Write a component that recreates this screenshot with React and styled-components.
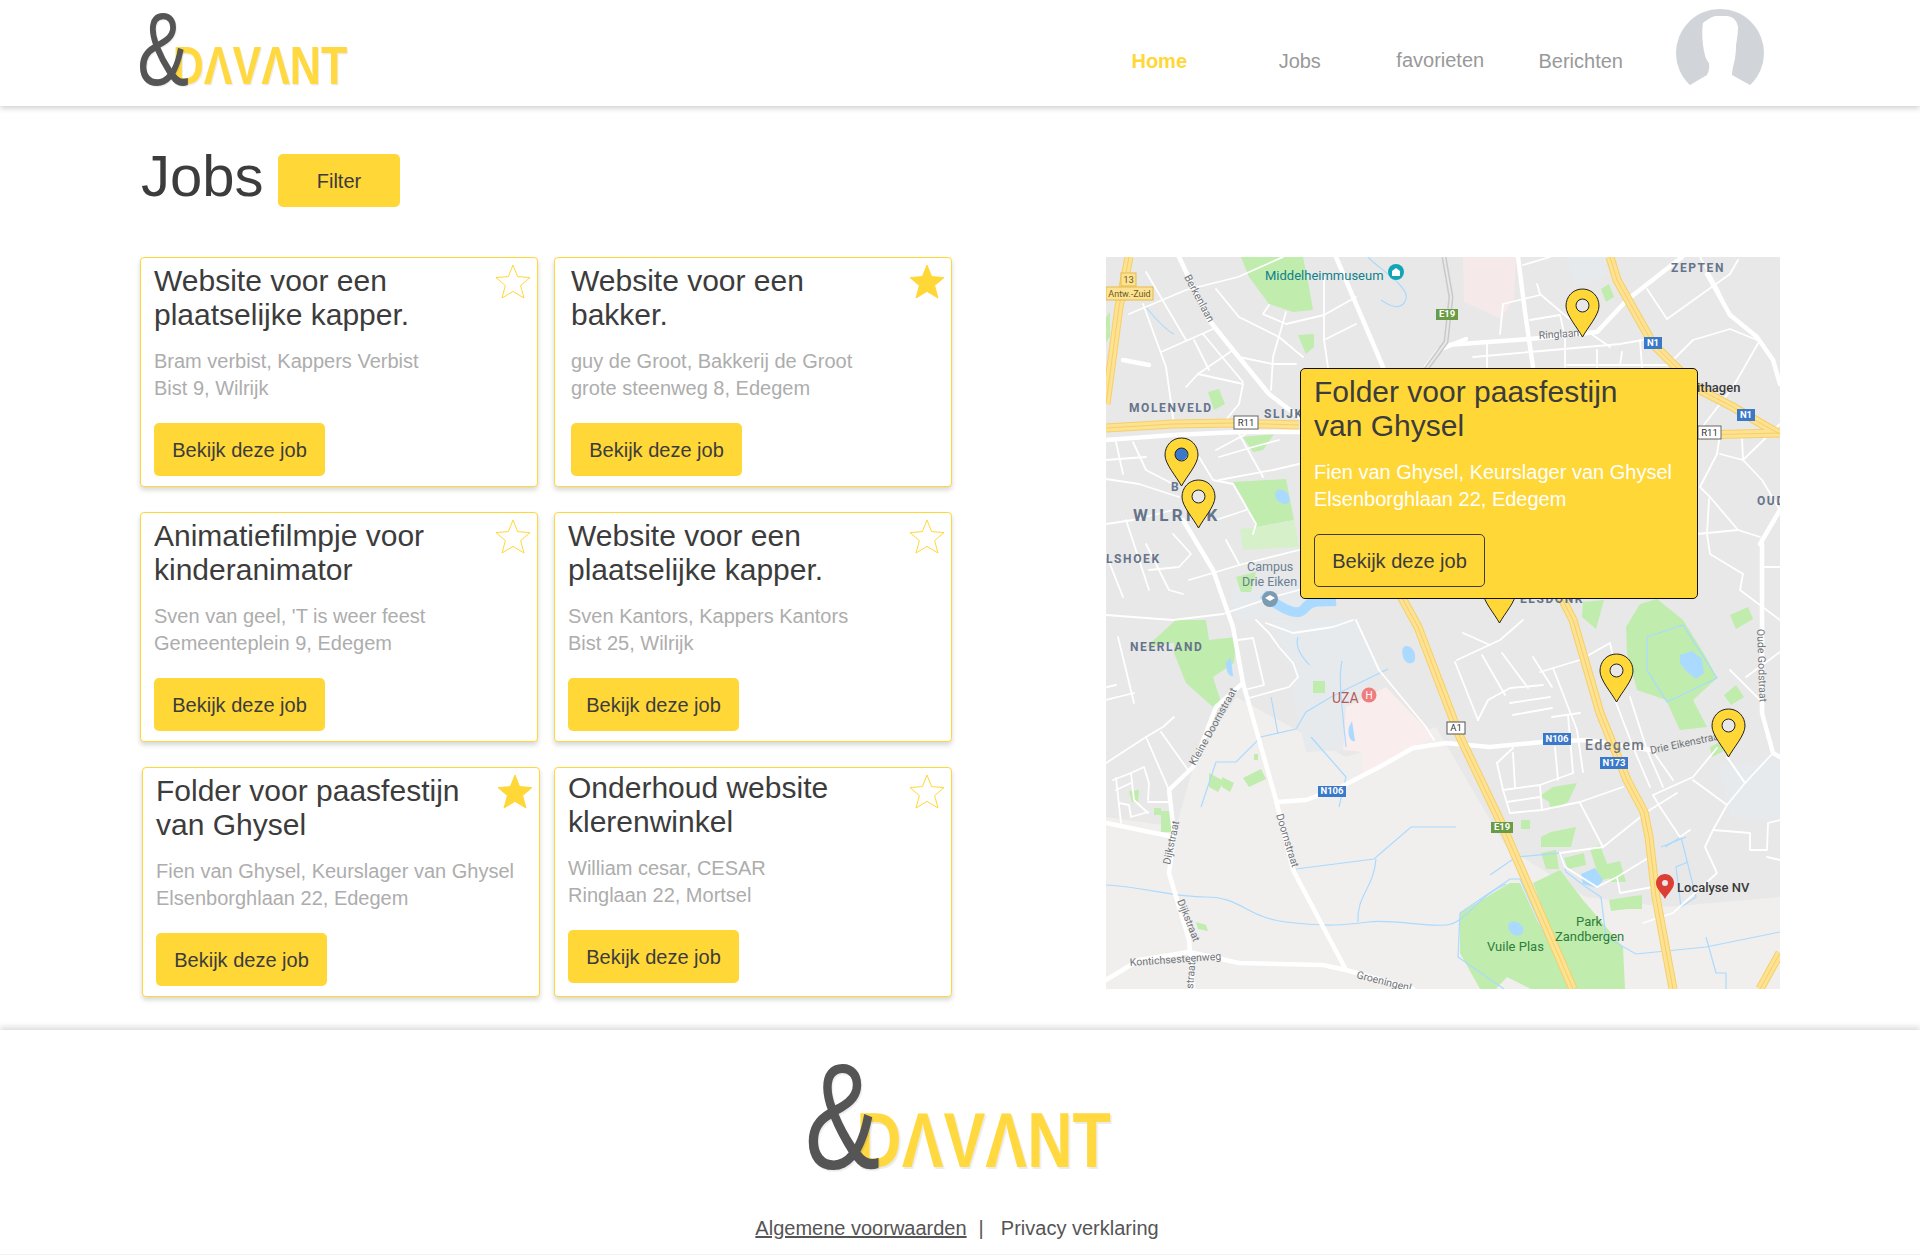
import React from "react";
import styled, { createGlobalStyle } from "styled-components";

const YELLOW = "#FFD737";
const DARK = "#3c3c3c";

const GlobalStyle = createGlobalStyle`
  html, body {
    margin: 0;
    padding: 0;
    background: #fff;
    font-family: "Liberation Sans", Arial, sans-serif;
    color: ${DARK};
  }
  * { box-sizing: border-box; }
`;

const Page = styled.div`
  width: 1920px;
  height: 1255px;
  overflow: hidden;
  background: #fff;
`;

const Header = styled.header`
  height: 106px;
  display: flex;
  align-items: flex-start;
  padding: 7px 156px 0 134px;
  background: #fff;
  box-shadow: 0 2px 6px rgba(0, 0, 0, 0.2);
`;

const LogoSvg = styled.svg`
  display: block;
  width: ${(p) => p.$width}px;
  height: ${(p) => (p.$width * 125) / 320}px;
  overflow: visible;
`;

const LogoAmp = styled.text`
  font-family: "Liberation Sans", Arial, sans-serif;
  font-size: 453px;
  fill: #555;
  filter: drop-shadow(5px 5px 2px rgba(0, 0, 0, 0.08));
`;

const LogoWord = styled.text`
  font-family: "Liberation Sans", Arial, sans-serif;
  font-weight: 700;
  font-size: 236px;
  fill: #ffd93f;
  filter: drop-shadow(6px 6px 2px rgba(0, 0, 0, 0.08));
`;

const Nav = styled.nav`
  display: flex;
  margin-left: auto;
  margin-top: 43px;
`;

const NavItem = styled.a`
  width: 140.5px;
  text-align: center;
  font-size: 20px;
  line-height: 23px;
  color: ${(p) => (p.$active ? YELLOW : "#999")};
  font-weight: ${(p) => (p.$active ? 700 : 400)};
  margin-top: ${(p) => (p.$raised ? -1 : 0)}px;
`;

const Avatar = styled.svg`
  display: block;
  width: 88px;
  height: 76px;
  margin: 2px 0 0 25px;
`;

const TitleRow = styled.div`
  height: 151px;
  display: flex;
  align-items: flex-start;
  padding: 38px 0 0 141px;
`;

const PageTitle = styled.h1`
  margin: 0;
  width: 118px;
  font-size: 58px;
  font-weight: 400;
  line-height: 64px;
  color: ${DARK};
`;

const Button = styled.a`
  display: inline-flex;
  align-items: center;
  justify-content: center;
  height: 53px;
  width: ${(p) => p.$width || 171}px;
  padding-top: 1px;
  border-radius: 5px;
  font-size: 20px;
  color: ${DARK};
  background: ${YELLOW};
  border: ${(p) => (p.$outlined ? `1px solid ${DARK}` : "none")};
`;

const FilterButton = styled(Button)`
  margin: 10px 0 0 19px;
`;

const Content = styled.main`
  display: flex;
  justify-content: space-between;
  align-items: flex-start;
  height: 740px;
  padding: 0 140px;
`;

const JobGrid = styled.div`
  display: grid;
  grid-template-columns: 398px 398px;
  grid-auto-rows: 230px;
  column-gap: 16px;
  row-gap: 25px;
`;

const Card = styled.article`
  width: 398px;
  height: 230px;
  margin-left: ${(p) => p.$shift || 0}px;
  padding: ${(p) => p.$top ?? 6}px 6px 0 ${(p) => p.$left ?? 13}px;
  background: #fff;
  border: 1px solid ${YELLOW};
  border-radius: 4px;
  box-shadow: 0 3px 5px rgba(0, 0, 0, 0.16);
`;

const CardHead = styled.div`
  display: flex;
  justify-content: space-between;
  align-items: flex-start;
`;

const JobTitle = styled.h2`
  margin: 0;
  font-size: 30px;
  font-weight: 400;
  line-height: 34px;
  color: ${DARK};
`;

const StarIcon = styled.svg`
  flex: none;
  display: block;
  width: 36px;
  height: 35px;
  margin-top: ${(p) => p.$offset}px;
`;

const JobInfo = styled.p`
  margin: 16px 0 21px;
  font-size: 20px;
  line-height: 27px;
  color: ${(p) => p.$color || "#adadad"};
`;

const MapFrame = styled.section`
  position: relative;
  width: 674px;
  height: 732px;
  flex: none;
`;

const MapSvg = styled.svg`
  display: block;
  width: 674px;
  height: 732px;
`;

const mapLabelStyles = {
  area: "font-size:12px;font-weight:700;fill:#65748a;letter-spacing:1.6px;",
  big: "font-size:17px;font-weight:700;fill:#65748a;letter-spacing:3.2px;",
  town: "font-size:14px;font-weight:500;fill:#6d7480;letter-spacing:1.6px;",
  road: "font-size:10.5px;font-weight:400;fill:#6f7479;",
  poi: "font-size:13px;font-weight:400;fill:#12808a;",
  campus: "font-size:12.5px;font-weight:400;fill:#6b7f92;",
  park: "font-size:13px;font-weight:400;fill:#2f7d3a;",
  dark: "font-size:13px;font-weight:500;fill:#3a3a3a;",
  uza: "font-size:14px;font-weight:400;fill:#b65a5a;",
};

const MapLabel = styled.text`
  font-family: Roboto, sans-serif;
  ${(p) => mapLabelStyles[p.$kind]}
`;

const ShieldText = styled.text`
  font-family: Roboto, sans-serif;
  font-size: ${(p) => p.$size || 9.5}px;
  font-weight: ${(p) => (p.$bold ? 700 : 400)};
  fill: ${(p) => p.$color};
  text-anchor: middle;
`;

const PinSvg = styled.svg`
  position: absolute;
  left: ${(p) => p.$x - 17.5}px;
  top: ${(p) => p.$y}px;
  width: 35px;
  height: 50px;
`;

const Popup = styled.div`
  position: absolute;
  left: 194px;
  top: 111px;
  width: 398px;
  height: 231px;
  padding: 6px 6px 0 13px;
  background: ${YELLOW};
  border: 1px solid #111;
  border-radius: 5px;
`;

const Footer = styled.footer`
  margin-top: 33px;
  height: 225px;
  padding-top: 25px;
  background: #fff;
  border-bottom: 1px solid #f2f2f2;
  box-shadow: 0 -3px 6px rgba(0, 0, 0, 0.14);
`;

const FooterLogo = styled.div`
  display: flex;
  justify-content: center;
`;

const FooterLinks = styled.div`
  display: flex;
  justify-content: center;
  margin-top: 37px;
  padding-right: 6px;
  font-size: 20px;
  line-height: 23px;
  color: #555;
`;

const FooterLink = styled.a`
  text-decoration: ${(p) => (p.$underlined ? "underline" : "none")};
`;

const Separator = styled.span`
  margin: 0 17px 0 12px;
`;

const jobs = [
  { title: ["Website voor een", "plaatselijke kapper."], info: ["Bram verbist, Kappers Verbist", "Bist 9, Wilrijk"] },
  { title: ["Website voor een", "bakker."], info: ["guy de Groot, Bakkerij de Groot", "grote steenweg 8, Edegem"], fav: true, left: 16 },
  { title: ["Animatiefilmpje voor", "kinderanimator"], info: ["Sven van geel, 'T is weer feest", "Gemeenteplein 9, Edegem"] },
  { title: ["Website voor een", "plaatselijke kapper."], info: ["Sven Kantors, Kappers Kantors", "Bist 25, Wilrijk"] },
  { title: ["Folder voor paasfestijn", "van Ghysel"], info: ["Fien van Ghysel, Keurslager van Ghysel", "Elsenborghlaan 22, Edegem"], fav: true, shift: 2 },
  { title: ["Onderhoud website", "klerenwinkel"], info: ["William cesar, CESAR", "Ringlaan 22, Mortsel"], top: 3 },
];

const Logo = ({ width }) => (
  <LogoSvg $width={width} viewBox="0 0 320 125" role="img" aria-label="&Davant">
    <g transform="scale(0.3333)">
      <LogoWord transform="translate(169 337) scale(0.798 1)" x="0" y="0">DΛVΛNT</LogoWord>
      <LogoAmp transform="translate(14 343) scale(0.75 1)" x="0" y="0">&amp;</LogoAmp>
    </g>
  </LogoSvg>
);

const Star = ({ filled, offset }) => (
  <StarIcon viewBox="0 0 36 35" $offset={offset}>
    <polygon
      points="18,1 22.6,12.6 35,13.6 25.6,21.6 29,34 18,27.4 7,34 10.4,21.6 1,13.6 13.4,12.6"
      fill={filled ? YELLOW : "#fff"}
      stroke={YELLOW}
      strokeWidth="1"
    />
  </StarIcon>
);

const Pin = ({ x, y }) => (
  <PinSvg $x={x} $y={y} viewBox="0 0 35 50">
    <path
      d="M17.5 1C8 1 1 8.5 1 18c0 9 11 21 16.5 31C23 39 34 27 34 18 34 8.5 27 1 17.5 1ZM17.5 11a6.5 6.5 0 1 1 0 13 6.5 6.5 0 0 1 0-13Z"
      fill={YELLOW}
      fillRule="evenodd"
      stroke="#222"
      strokeWidth="1"
    />
  </PinSvg>
);

// map drawing, all points are in map pixels
const parks = [
  "135,0 143,20 163,47 187,55 207,53 203,30 197,0",
  "192,78 208,77 208,90 200,97",
  "102,135 113,132 119,147 108,153",
  "127,225 180,222 188,263 150,270 138,243",
  "137,180 168,177 157,193 147,195",
  "68,363 100,363 103,383 130,380 128,406 107,420 115,445 107,450 80,426 68,396",
  "520,370 534,347 551,342 577,363 600,400 611,421 587,443 601,470 574,473 560,443 531,433 521,396",
  "427,626 454,613 477,643 517,690 519,732 467,732",
  "354,656 404,626 414,626 431,663 467,732 425,732 401,720 390,732 374,732 354,696",
  "130,320 150,315 145,335 135,335",
  "70,363 72,385 40,390",
  "207,424 219,424 219,436 207,436",
  "103,516 118,524 112,535 103,530",
  "116,520 128,526 124,535 116,530",
  "137,521 155,512 160,522 143,530",
  "148,497 152,497 152,503 148,503",
  "23,534 33,533 32,545 26,545",
  "48,551 55,551 55,558 48,558",
  "55,554 67,554 67,575 55,575",
  "90,665 100,668 102,674 92,672",
  "434,539 447,530 471,526 462,545 445,553 443,545",
  "415,563 424,563 424,572 415,572",
  "435,580 445,575 470,570 465,590 435,590",
  "435,596 450,593 453,612 440,612",
  "458,601 478,596 480,608 462,612",
  "484,592 494,588 506,620 494,624",
  "497,608 514,604 520,625 505,625",
  "503,643 521,640 521,652 505,654",
  "521,640 536,638 536,652 521,652",
  "618,438 630,428 638,440 625,448",
  "495,32 503,27 508,40 500,45",
  "624,358 642,350 647,362 630,372",
  "604,490 620,482 625,490 606,500",
  "0,60 4,55 4,80 0,85",
  "477,345 476,360 490,372 498,343",
];

const paleParks = ["150,270 188,263 193,290 137,293 134,272"];

const zones = [
  { fill: "#f0efee", points: "0,560 70,570 90,500 130,440 240,500 330,470 400,590 480,640 560,650 674,640 674,732 0,732" },
  { fill: "#e6eaec", points: "163,363 250,363 275,413 240,450 237,493 200,495 185,430 192,420" },
  { fill: "#e6eaec", points: "125,330 190,320 200,360 130,362" },
  { fill: "#f9eded", points: "240,450 280,430 328,480 280,506 257,520 257,495 237,493" },
  { fill: "#f5e9e9", points: "357,0 410,0 408,42 395,62 358,45" },
  { fill: "#e6eaec", points: "612,510 674,500 674,565 625,560" },
  { fill: "#e6eaec", points: "460,0 500,0 500,20 470,30" },
];

const water = [
  "M157 337C168 346 190 362 198 352S214 345 230 344",
  "M172 238C178 232 186 240 182 246",
  "M262 0C273 12 304 30 300 42S285 50 275 43",
  "M40 50C48 60 60 73 68 77",
  "M192 380C187 395 205 408 203 408",
  "M236 404C232 420 236 450 240 490",
  "M282 412L245 430 225 440 200 455 190 472 155 480 130 505 110 505 95 550",
  "M165 440L172 477",
  "M205 480L240 520 233 550",
  "M0 628C40 630 65 640 100 640S140 660 180 665 240 668 262 665 320 670 340 668 370 640 400 627",
  "M190 612L268 602 305 570 350 570",
  "M270 602C268 630 250 640 252 665",
  "M384 618L410 600 455 596 460 615 480 630 495 640 500 680 530 697 600 690 674 675",
  "M559 590L575 580 590 640 575 650 570 610 582 605",
  "M541 380L577 368 611 421 561 445 541 413Z",
  "M580 580L555 590",
  "M354 656L404 622 414 622 440 680 470 732",
  "M354 656L352 700 398 732",
  "M600 680L610 716 620 716 620 732",
];

const waterAreas = [
  "M172 233c6-2 12 4 11 10s-7 4-11 1-4-9 0-11Z",
  "M300 389c6 0 10 6 9 13s-10 5-12-2 0-11 3-11Z",
  "M574 398l12-4 10 8 2 14-8 6-10-8-6-8Z",
  "M120 405l5-4 2 18c-4 2-8-8-7-14Z",
  "M243 470l3-6 3 20c-4 2-8-6-6-14Z",
  "M405 665c6-2 14 4 12 10s-12 4-14-2 0-7 2-8Z",
  "M475 617l14-6 8 12-6 8-14-4Z",
];

const majorRoads = [
  "341,88 424,82 491,75 521,43 567,7 576,0",
  "73,0 103,63 127,93 163,137 193,160",
  "0,183 67,178 133,175 193,175",
  "412,0 419,55 427,110",
  "77,263 107,313 127,370 137,426 170,543 187,613 240,713",
  "170,545 200,543 233,531 277,508 307,491 340,486 384,490 437,485 481,483 544,493",
  "137,426 110,450 87,510 63,533 68,576 63,616 83,683 87,732",
  "0,723 33,703 83,695 133,706 217,708 240,713 307,732",
  "0,566 68,580",
  "656,287 656,456 667,496 674,500",
  "674,253 654,287",
  "230,0 277,110",
  "320,110 333,93 360,82",
  "17,103 43,108",
  "624,58 651,80 667,103 674,127",
  "601,17 624,58",
];

const minorRoads = [
  "40,15 80,83", "23,57 80,33 132,20 177,0", "55,95 107,72", "110,32 133,60 173,80 197,100",
  "163,48 157,57 180,67 218,58 250,40", "218,20 218,83 222,110", "180,55 167,100 165,133",
  "218,83 250,67", "133,100 167,107 190,107", "92,117 137,127 133,147 120,163", "80,130 92,117 127,93",
  "37,47 60,110 68,167", "88,83 103,113", "97,77 137,125", "10,185 17,217", "27,185 40,213 67,227",
  "0,203 40,200", "0,222 33,227 73,240", "110,193 140,177", "133,177 157,220", "113,200 147,190 173,183",
  "93,200 107,223 127,227", "113,223 167,213 193,207", "127,227 150,267 147,277", "0,267 27,263 67,253",
  "20,263 43,333", "0,297 17,340", "40,287 63,333 77,337", "67,277 85,297 73,310 43,313", "110,263 140,253",
  "0,358 67,363 117,357 167,340 193,333", "83,323 137,307 193,293", "120,283 133,307",
  "431,27 434,37 461,60 504,90", "397,47 434,38", "397,47 394,77", "424,63 454,58", "454,58 459,80 459,110",
  "381,87 381,110", "367,100 514,87 537,83", "491,93 491,110", "516,95 514,108", "534,83 536,110",
  "461,108 567,108", "417,8 444,0", "541,32 561,62", "567,103 587,83 624,72 651,83", "561,62 624,17 632,3",
  "594,0 611,30 624,58", "654,83 627,130 594,173", "614,177 611,197 594,230", "614,197 637,203 674,167",
  "636,180 637,203 656,223 674,253", "594,230 604,240 632,273 654,280", "603,242 601,277 604,297 637,317 634,333 674,363",
  "591,277 632,273", "656,310 674,310", "12,380 28,446", "0,443 28,436", "0,506 40,480 57,470 68,460",
  "40,480 63,533", "55,475 82,513", "7,523 25,516 38,510 43,526 42,543", "25,516 28,543 42,556",
  "10,533 25,526", "13,546 23,548 25,560 42,555", "42,545 63,545", "10,521 15,566",
  "132,383 147,381 158,428 138,433", "143,441 183,430 192,420 187,406 173,390 163,376 150,363",
  "160,366 187,376 227,370 247,363", "250,363 273,413 320,470 328,483", "351,403 394,383 417,363",
  "349,405 372,463", "357,376 384,388", "376,398 399,438", "396,396 422,431", "427,400 446,430",
  "447,411 471,473 477,515", "434,415 474,403 504,386 507,400", "372,463 382,443 404,431 437,428",
  "404,446 444,440", "407,458 446,451", "446,460 474,456", "391,506 397,533 404,556", "391,506 407,491",
  "397,533 434,528 467,516", "401,545 434,540", "404,556 436,553 474,545 517,530", "407,496 409,530",
  "434,528 436,553", "449,490 452,523", "462,458 467,516", "509,443 527,490 544,530", "524,440 541,493 557,530",
  "546,493 567,523", "547,538 587,520 611,491", "587,523 621,548 639,526 621,500", "539,556 571,536",
  "621,548 607,573 599,590 611,616 567,656 537,666", "547,538 554,550 574,580 584,573", "537,558 497,590 454,596",
  "474,546 497,590", "454,596 459,610 491,630", "547,598 511,620 491,630", "511,620 514,636 547,630",
  "607,573 644,576 644,593 661,593 662,566 674,563", "661,600 674,603", "624,413 654,443", "667,496 639,526",
  "621,500 639,526", "640,420 674,395", "1,430 10,428",
];

const motorways = [
  "23,0 13,50 0,147",
  "0,171 67,167 127,166 193,168",
  "591,178 674,176",
  "504,0 511,23 547,87 567,107 594,133 627,150 661,170 674,177",
  "290,330 312,370 354,480 397,570 467,732",
  "450,330 467,363 494,456 521,523 538,555 543,580 550,640 567,732",
  "674,696 654,732",
];

const shields = [
  { x: 538, y: 80, w: 18, h: 12, fill: "#3a78c9", color: "#fff", text: "N1", bold: true },
  { x: 631, y: 152, w: 18, h: 12, fill: "#3a78c9", color: "#fff", text: "N1", bold: true },
  { x: 330, y: 52, w: 22, h: 11, fill: "#6a9c45", color: "#fff", text: "E19", bold: true },
  { x: 385, y: 565, w: 22, h: 11, fill: "#6a9c45", color: "#fff", text: "E19", bold: true },
  { x: 437, y: 476, w: 28, h: 12, fill: "#3a78c9", color: "#fff", text: "N106", bold: true },
  { x: 212, y: 529, w: 28, h: 11, fill: "#3a78c9", color: "#fff", text: "N106", bold: true },
  { x: 494, y: 500, w: 28, h: 12, fill: "#3a78c9", color: "#fff", text: "N173", bold: true },
  { x: 128, y: 159, w: 24, h: 13, fill: "#fff", stroke: "#666", color: "#333", text: "R11" },
  { x: 592, y: 169, w: 23, h: 13, fill: "#fff", stroke: "#666", color: "#333", text: "R11" },
  { x: 341, y: 465, w: 18, h: 12, fill: "#fff", stroke: "#555", color: "#333", text: "A1" },
  { x: 15, y: 16, w: 15, h: 13, fill: "#fde293", stroke: "#e6b94a", color: "#6b5a20", text: "13" },
  { x: 0, y: 30, w: 47, h: 13, fill: "#fde293", stroke: "#e6b94a", color: "#6b5a20", text: "Antw.-Zuid", size: 9 },
];

const labels = [
  { kind: "area", x: 565, y: 15, text: "ZEPTEN" },
  { kind: "area", x: 23, y: 155, text: "MOLENVELD" },
  { kind: "area", x: 158, y: 161, text: "SLIJK" },
  { kind: "area", x: 65, y: 234, text: "B" },
  { kind: "big", x: 27, y: 264, text: "WILRIJK" },
  { kind: "area", x: 0, y: 306, text: "LSHOEK" },
  { kind: "area", x: 651, y: 248, text: "OUD" },
  { kind: "area", x: 414, y: 346, text: "ELSDONK" },
  { kind: "area", x: 24, y: 394, text: "NEERLAND" },
  { kind: "campus", x: 141, y: 314, text: "Campus" },
  { kind: "campus", x: 136, y: 329, text: "Drie Eiken" },
  { kind: "poi", x: 159, y: 23, text: "Middelheimmuseum" },
  { kind: "road", x: 78, y: 20, rotate: 62, text: "Berkenlaan" },
  { kind: "road", x: 433, y: 82, rotate: -4, text: "Ringlaan" },
  { kind: "dark", x: 591, y: 135, text: "ithagen" },
  { kind: "town", x: 479, y: 493, text: "Edegem" },
  { kind: "road", x: 545, y: 497, rotate: -12, text: "Drie Eikenstraat" },
  { kind: "road", x: 651, y: 372, rotate: 88, text: "Oude Godstraat" },
  { kind: "road", x: 89, y: 509, rotate: -61, text: "Kleine Doornstraat" },
  { kind: "road", x: 64, y: 608, rotate: -78, text: "Dijkstraat" },
  { kind: "road", x: 71, y: 644, rotate: 68, text: "Dijkstraat" },
  { kind: "road", x: 87, y: 732, rotate: -85, text: "straat" },
  { kind: "road", x: 170, y: 558, rotate: 73, text: "Doornstraat" },
  { kind: "road", x: 24, y: 709, rotate: -4, text: "Kontichsesteenweg" },
  { kind: "road", x: 250, y: 721, rotate: 14, text: "Groeningenl" },
  { kind: "uza", x: 226, y: 446, text: "UZA" },
  { kind: "park", x: 381, y: 694, text: "Vuile Plas" },
  { kind: "park", x: 470, y: 669, text: "Park" },
  { kind: "park", x: 449, y: 684, text: "Zandbergen" },
  { kind: "dark", x: 571, y: 635, text: "Localyse NV" },
];

const MapDrawing = () => (
  <MapSvg viewBox="0 0 674 732">
    <rect width="674" height="732" fill="#e8e8e8" />
    {zones.map((z) => (
      <polygon key={z.points} points={z.points} fill={z.fill} />
    ))}
    {parks.map((p) => (
      <polygon key={p} points={p} fill="#c0ecae" />
    ))}
    {paleParks.map((p) => (
      <polygon key={p} points={p} fill="#d6f0ca" />
    ))}
    {waterAreas.map((d) => (
      <path key={d} d={d} fill="#aadaff" />
    ))}
    {water.map((d, i) => (
      <path key={d} d={d} fill="none" stroke="#aadaff" strokeWidth={i === 0 ? 10 : 1.2} />
    ))}
    <g fill="none" stroke="#fff" strokeLinejoin="round" strokeLinecap="round">
      {minorRoads.map((r) => (
        <polyline key={r} points={r} strokeWidth="1.8" />
      ))}
      {majorRoads.map((r) => (
        <polyline key={r} points={r} strokeWidth="4.5" />
      ))}
    </g>
    <polyline points="338,0 345,40 340,85 318,115" fill="none" stroke="#c9c9c9" strokeWidth="5" />
    <polyline points="338,0 345,40 340,85 318,115" fill="none" stroke="#e8e8e8" strokeWidth="2" />
    <g fill="none" strokeLinejoin="round">
      {motorways.map((r) => (
        <polyline key={r} points={r} stroke="#f6cf65" strokeWidth="9" />
      ))}
      {motorways.map((r) => (
        <polyline key={r} points={r} stroke="#fde293" strokeWidth="7" />
      ))}
      {motorways.map((r) => (
        <polyline key={r} points={r} stroke="#f6cf65" strokeWidth="1" />
      ))}
    </g>
    <circle cx="290" cy="15" r="8" fill="#12a5b5" />
    <path d="M286 19v-5l4-3 4 3v5Z" fill="#fff" />
    <circle cx="164" cy="342" r="8" fill="#7c9bb0" />
    <path d="M159 341l5-3 5 3-5 3Z" fill="#fff" />
    <circle cx="263" cy="438" r="7.5" fill="#f07d7d" />
    <ShieldText x="263" y="442" $size={10} $color="#fff">H</ShieldText>
    <circle cx="75" cy="197" r="6.5" fill="#3a78c9" />
    <path d="M559 617c-5 0-9 4-9 9 0 6 6 10 9 16 3-6 9-10 9-16 0-5-4-9-9-9Zm0 6a3 3 0 1 1 0 6 3 3 0 0 1 0-6Z" fill="#dc3d34" fillRule="evenodd" />
    {shields.map((s) => (
      <g key={`${s.text}${s.x}`}>
        <rect x={s.x} y={s.y} width={s.w} height={s.h} fill={s.fill} stroke={s.stroke || "none"} />
        <ShieldText x={s.x + s.w / 2} y={s.y + s.h - 3} $size={s.size} $bold={s.bold} $color={s.color}>
          {s.text}
        </ShieldText>
      </g>
    ))}
    {labels.map((l) => (
      <MapLabel
        key={`${l.text}${l.x}`}
        $kind={l.kind}
        x={l.x}
        y={l.y}
        transform={l.rotate ? `rotate(${l.rotate} ${l.x} ${l.y})` : undefined}
      >
        {l.text}
      </MapLabel>
    ))}
  </MapSvg>
);

const App = () => (
  <Page>
    <GlobalStyle />
    <Header>
      <Logo width={219.5} />
      <Nav>
        <NavItem $active>Home</NavItem>
        <NavItem>Jobs</NavItem>
        <NavItem $raised>favorieten</NavItem>
        <NavItem>Berichten</NavItem>
      </Nav>
      <Avatar viewBox="0 0 88 76">
        <ellipse cx="44" cy="44" rx="44" ry="44" fill="#d1d5da" />
        <path
          d="M14 76 31 66C34 60 33 57 33 54 29 50 28 42 27 36 26 28 26 20 27 14 31 11 36 7 40 7H51C58 8 61 12 62 18 62 24 61 30 60 36 60 44 59 50 58 54 57 58 56 62 56 66L74 76 88 88H0Z"
          fill="#fff"
        />
      </Avatar>
    </Header>

    <TitleRow>
      <PageTitle>Jobs</PageTitle>
      <FilterButton $width={122}>Filter</FilterButton>
    </TitleRow>

    <Content>
      <JobGrid>
        {jobs.map((job) => (
          <Card key={job.info[1]} $shift={job.shift} $left={job.left} $top={job.top}>
            <CardHead>
              <JobTitle>
                {job.title[0]}
                <br />
                {job.title[1]}
              </JobTitle>
              <Star filled={job.fav} offset={job.top ? 3 : 0} />
            </CardHead>
            <JobInfo>
              {job.info[0]}
              <br />
              {job.info[1]}
            </JobInfo>
            <Button>Bekijk deze job</Button>
          </Card>
        ))}
      </JobGrid>

      <MapFrame>
        <MapDrawing />
        <Pin x={75} y={180} />
        <Pin x={92} y={222} />
        <Pin x={476} y={31} />
        <Pin x={510} y={396} />
        <Pin x={622} y={451} />
        <Pin x={393} y={317} />
        <Popup>
          <JobTitle>
            Folder voor paasfestijn
            <br />
            van Ghysel
          </JobTitle>
          <JobInfo $color="#fff">
            Fien van Ghysel, Keurslager van Ghysel
            <br />
            Elsenborghlaan 22, Edegem
          </JobInfo>
          <Button $outlined>Bekijk deze job</Button>
        </Popup>
      </MapFrame>
    </Content>

    <Footer>
      <FooterLogo>
        <Logo width={320} />
      </FooterLogo>
      <FooterLinks>
        <FooterLink $underlined>Algemene voorwaarden</FooterLink>
        <Separator>|</Separator>
        <FooterLink>Privacy verklaring</FooterLink>
      </FooterLinks>
    </Footer>
  </Page>
);

export default App;
